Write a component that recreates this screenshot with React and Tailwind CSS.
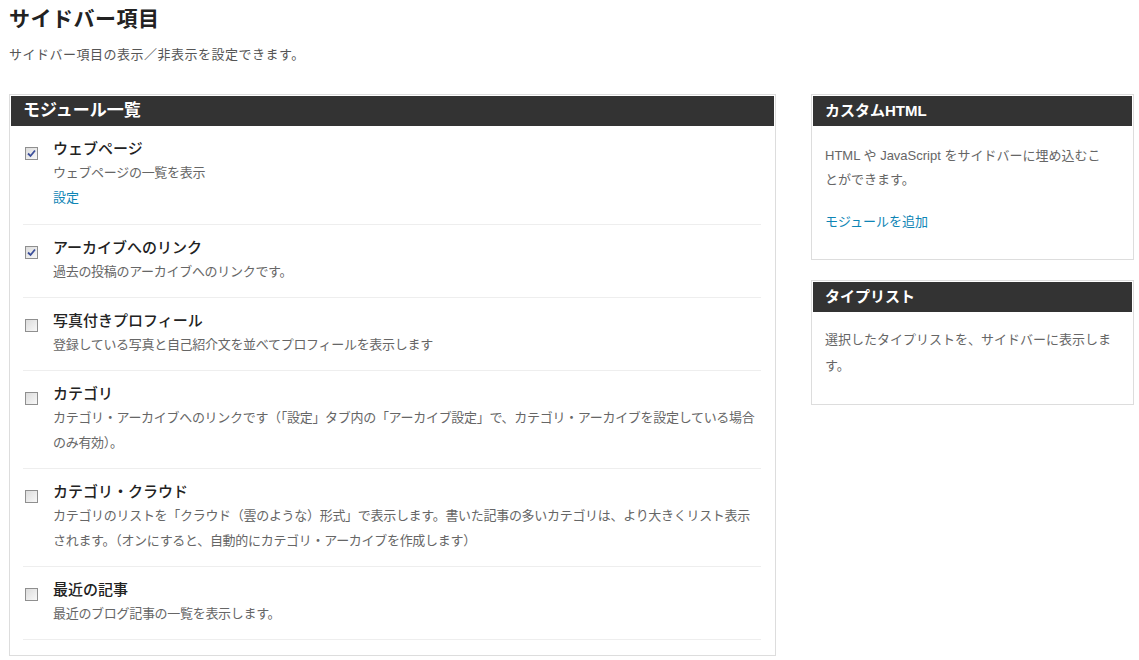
import React from "react";

const modules = [
  {
    title: "ウェブページ",
    checked: true,
    desc: ["ウェブページの一覧を表示"],
    link: "設定",
  },
  {
    title: "アーカイブへのリンク",
    checked: true,
    desc: ["過去の投稿のアーカイブへのリンクです。"],
  },
  {
    title: "写真付きプロフィール",
    checked: false,
    desc: ["登録している写真と自己紹介文を並べてプロフィールを表示します"],
  },
  {
    title: "カテゴリ",
    checked: false,
    desc: [
      "カテゴリ・アーカイブへのリンクです（「設定」タブ内の「アーカイブ設定」で、カテゴリ・アーカイブを設定している場合",
      "のみ有効）。",
    ],
  },
  {
    title: "カテゴリ・クラウド",
    checked: false,
    desc: [
      "カテゴリのリストを「クラウド（雲のような）形式」で表示します。書いた記事の多いカテゴリは、より大きくリスト表示",
      "されます。（オンにすると、自動的にカテゴリ・アーカイブを作成します）",
    ],
  },
  {
    title: "最近の記事",
    checked: false,
    desc: ["最近のブログ記事の一覧を表示します。"],
  },
];

function Checkbox({ checked }) {
  return (
    <span className="mt-[10px] flex h-[13px] w-[13px] shrink-0 items-center justify-center border border-[#8f8f8f] bg-gradient-to-br from-[#dcdcdc] to-[#f8f8f8]">
      {checked && (
        <svg width="9" height="9" viewBox="0 0 9 9">
          <path
            d="M1 4.5 L3.5 7 L8 1.5"
            fill="none"
            stroke="#3c4f9a"
            strokeWidth="1.8"
          />
        </svg>
      )}
    </span>
  );
}

function SidePanel({ title, children, className = "" }) {
  return (
    <div className={`border border-[#ddd] p-px ${className}`}>
      <div className="h-[30px] bg-[#333] px-3 text-[15px] font-bold leading-[30px] text-white">
        {title}
      </div>
      {children}
    </div>
  );
}

export default function App() {
  return (
    <div className="min-h-screen bg-white px-[9px] pt-[6px] font-['Liberation_Sans','Noto_Sans_CJK_JP',sans-serif] text-[#222]">
      <h1 className="text-[21px] font-bold leading-[26px] tracking-[0.5px]">サイドバー項目</h1>
      <p className="mt-[13px] text-[13px] leading-[20px] tracking-[0.5px] text-[#555]">
        サイドバー項目の表示／非表示を設定できます。
      </p>

      <div className="mt-[29px] flex items-start">
        {/* module list */}
        <div className="w-[767px] shrink-0 border border-[#ddd] p-px">
          <div className="h-[30px] bg-[#333] px-3 text-[17px] font-bold leading-[30px] text-white">
            モジュール一覧
          </div>
          <ul className="ml-3 mr-[13px] pb-[14px]">
            {modules.map((m) => (
              <li
                key={m.title}
                className="flex gap-[15px] border-b border-[#eee] pb-[13px] pt-[11px] pl-[2px]"
              >
                <Checkbox checked={m.checked} />
                <div>
                  <div className="text-[15px] font-medium leading-[23px] text-[#222]">
                    {m.title}
                  </div>
                  <div className="whitespace-nowrap text-[13px] leading-[25px] tracking-[-0.3px] text-[#666]">
                    {m.desc.map((line, i) => (
                      <div key={i}>{line}</div>
                    ))}
                  </div>
                  {m.link && (
                    <a className="block text-[13px] leading-[26px] text-[#0e85b5]">
                      {m.link}
                    </a>
                  )}
                </div>
              </li>
            ))}
          </ul>
        </div>

        {/* right column */}
        <div className="ml-[35px] w-[323px] shrink-0">
          <SidePanel title="カスタムHTML">
            <div className="px-3 pb-[24px] pt-[18px] text-[13px] text-[#666]">
              <p className="leading-[24px]">
                HTML や JavaScript をサイドバーに埋め込むこ
                <br />
                とができます。
              </p>
              <a className="mt-[18px] block leading-[24px] text-[#0e85b5]">
                モジュールを追加
              </a>
            </div>
          </SidePanel>
          <SidePanel title="タイプリスト" className="mt-[20px]">
            <div className="px-3 pb-[24px] pt-[15px] text-[13px] leading-[26px] text-[#666]">
              <p>
                選択したタイプリストを、サイドバーに表示しま
                <br />
                す。
              </p>
            </div>
          </SidePanel>
        </div>
      </div>
    </div>
  );
}
